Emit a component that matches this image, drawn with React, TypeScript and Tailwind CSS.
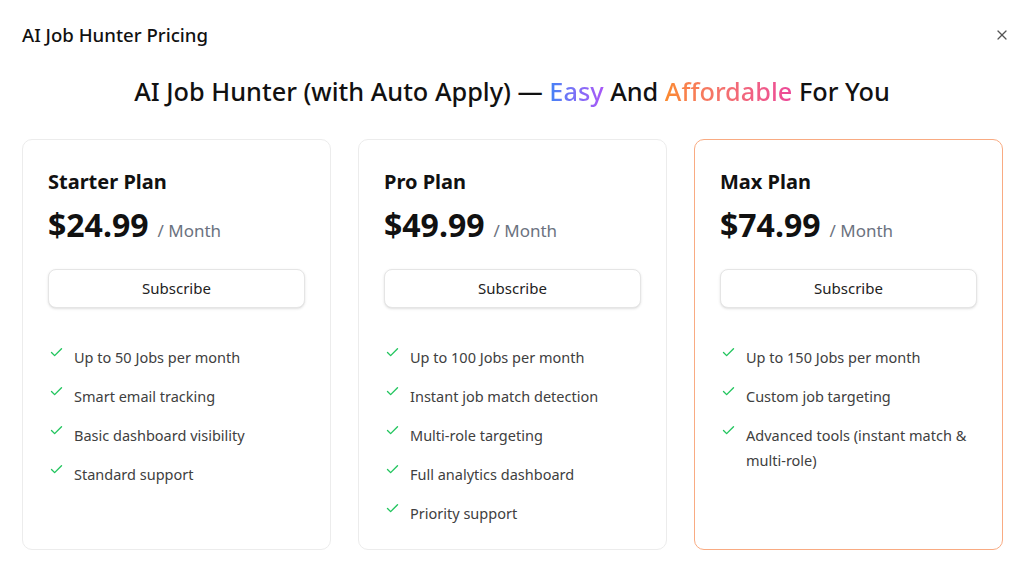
import React from "react";
import { Check, X } from "lucide-react";

interface Plan {
  name: string;
  price: string;
  features: string[];
  highlight?: boolean;
}

const plans: Plan[] = [
  {
    name: "Starter Plan",
    price: "$24.99",
    features: [
      "Up to 50 Jobs per month",
      "Smart email tracking",
      "Basic dashboard visibility",
      "Standard support",
    ],
  },
  {
    name: "Pro Plan",
    price: "$49.99",
    features: [
      "Up to 100 Jobs per month",
      "Instant job match detection",
      "Multi-role targeting",
      "Full analytics dashboard",
      "Priority support",
    ],
  },
  {
    name: "Max Plan",
    price: "$74.99",
    features: [
      "Up to 150 Jobs per month",
      "Custom job targeting",
      "Advanced tools (instant match & multi-role)",
    ],
    highlight: true,
  },
];

const PlanCard: React.FC<{ plan: Plan }> = ({ plan }) => (
  <div
    className={
      plan.highlight
        ? "h-[411px] rounded-[10px] border border-[#f9ab82] bg-white px-[25px] pt-[28px]"
        : "h-[411px] rounded-[10px] border border-[#ececec] bg-white px-[25px] pt-[28px]"
    }
  >
    <h3 className="text-[20px] leading-[28px] font-bold text-[#111]">
      {plan.name}
    </h3>
    <div className="mt-[9px] flex items-baseline gap-[9px]">
      <span className="text-[32px] leading-[40px] font-bold text-[#111]">
        {plan.price}
      </span>
      <span className="text-[17px] text-[#6b7280]">/ Month</span>
    </div>
    <button className="mt-[24px] h-[39px] w-full rounded-lg border border-[#e5e5e5] bg-white text-[15px] text-[#222] shadow-sm">
      Subscribe
    </button>
    <ul className="mt-[37px] flex flex-col gap-[14px]">
      {plan.features.map((f) => (
        <li key={f} className="flex items-start gap-[10px]">
          <Check
            className="mt-0 ml-[1px] h-[15px] w-[15px] shrink-0 text-[#22c55e]"
            strokeWidth={2.2}
          />
          <span className="text-[14.5px] leading-[25px] text-[#404040]">{f}</span>
        </li>
      ))}
    </ul>
  </div>
);

export default function App() {
  return (
    <div
      className="h-[569px] w-full bg-white"
      style={{ fontFamily: '"Noto Sans", "Open Sans", sans-serif' }}
    >
      <div className="flex h-[70px] items-center justify-between pl-[22px] pr-[14px]">
        <h1 className="text-[18.6px] font-medium text-[#111]">
          AI Job Hunter Pricing
        </h1>
        <button className="text-[#555]">
          <X className="h-4 w-4" strokeWidth={1.8} />
        </button>
      </div>
      <h2 className="mt-[3px] text-center text-[25.3px] leading-[36px] font-medium text-[#111]">
        AI Job Hunter (with Auto Apply) —{" "}
        <span className="bg-gradient-to-r from-[#3b82f6] to-[#a855f7] bg-clip-text text-transparent">
          Easy
        </span>{" "}
        And{" "}
        <span className="bg-gradient-to-r from-[#fb8a2e] to-[#ec4899] bg-clip-text text-transparent">
          Affordable
        </span>{" "}
        For You
      </h2>
      <div className="mt-[30px] grid grid-cols-3 gap-[27px] pl-[22px] pr-[21px]">
        {plans.map((p) => (
          <PlanCard key={p.name} plan={p} />
        ))}
      </div>
    </div>
  );
}
